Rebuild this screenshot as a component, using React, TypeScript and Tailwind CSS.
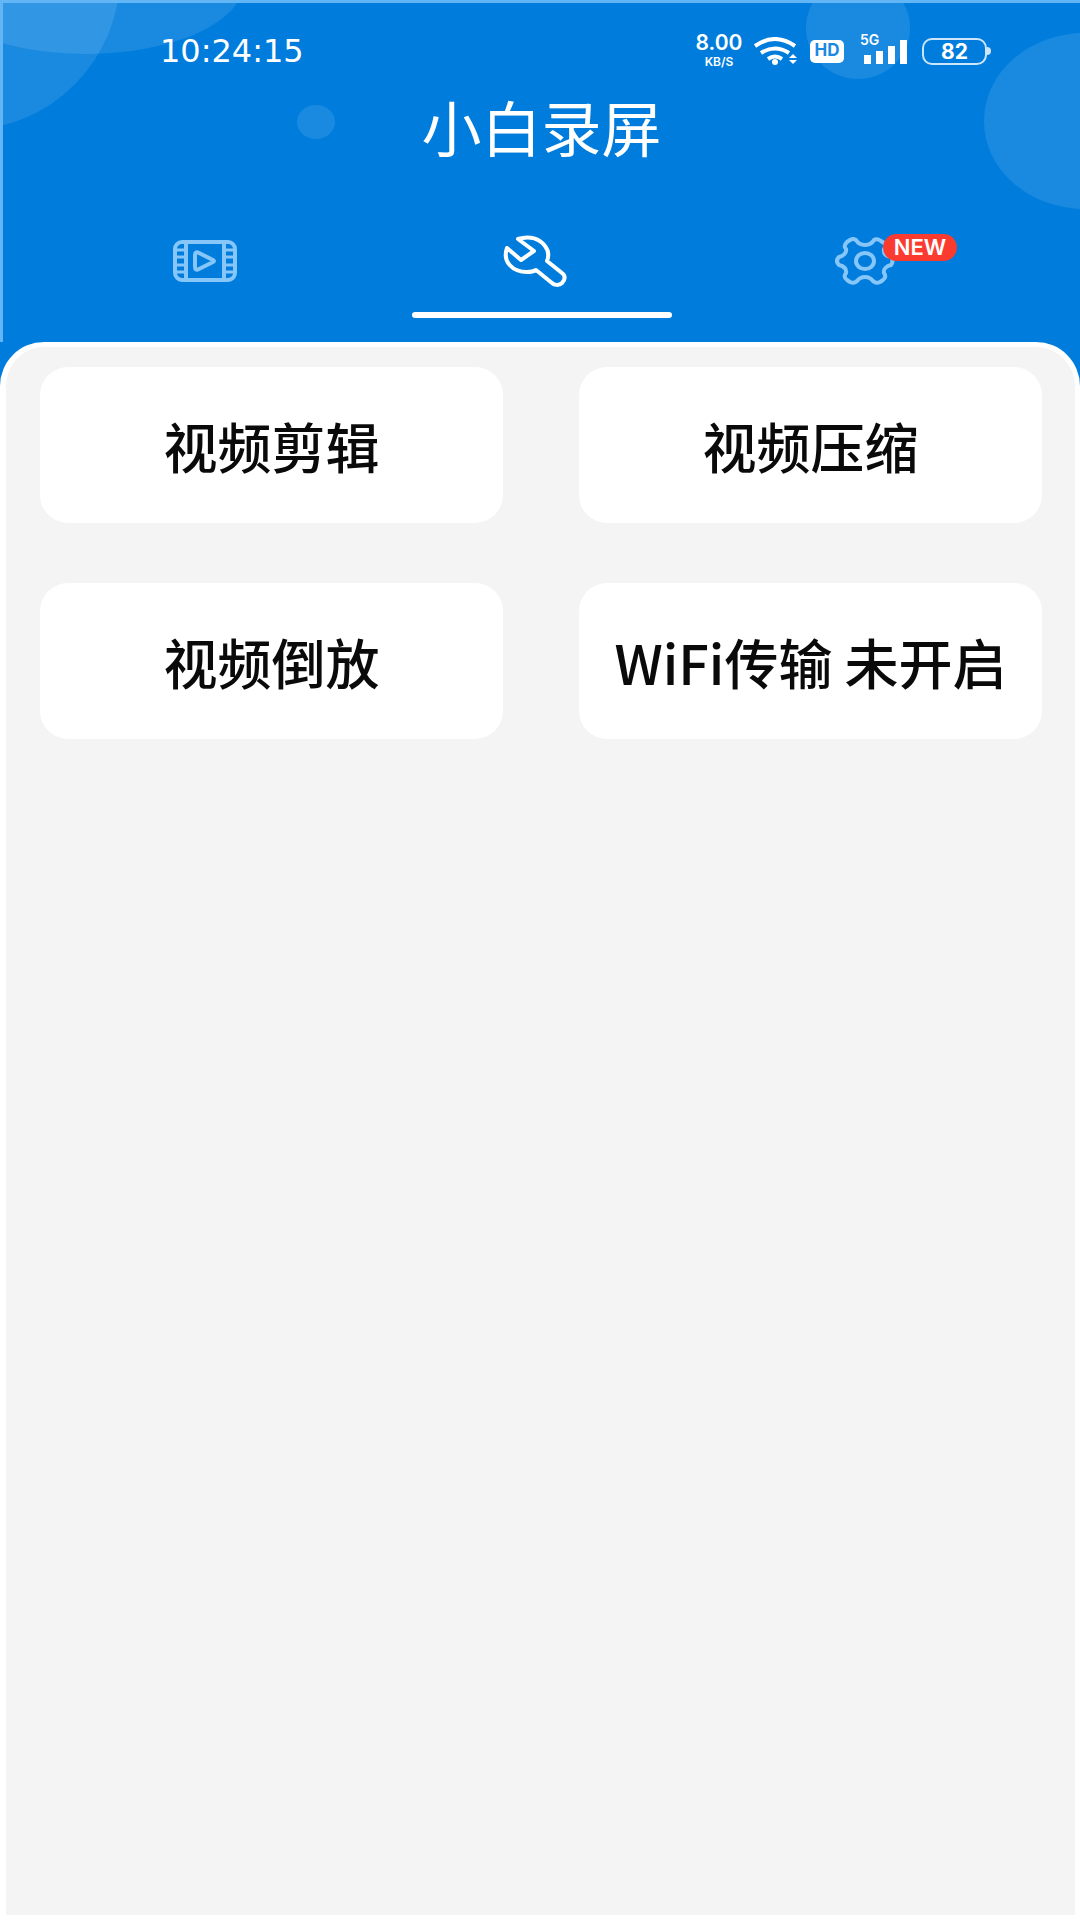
import { useState } from "react";
import clsx from "clsx";

const tools = ["视频剪辑", "视频压缩", "视频倒放", "WiFi传输 未开启"];

function FilmIcon() {
  return (
    <svg width="64" height="42" viewBox="0 0 64 42" fill="none" stroke="currentColor" strokeWidth="4" strokeLinejoin="round">
      <rect x="2" y="2" width="60" height="38" rx="7" />
      <path d="M13 2v38M51 2v38" />
      <path strokeWidth="3" d="M2 10h10M2 17h10M2 25h10M2 32h10M52 10h10M52 17h10M52 25h10M52 32h10" />
      <path d="M22 15q0-4 4-2l14 7q2 1 0 2l-14 7q-4 2-4-2z" />
    </svg>
  );
}

function WrenchIcon() {
  return (
    <svg width="64" height="52" viewBox="0 0 64 52" fill="none" stroke="currentColor" strokeWidth="4" strokeLinejoin="round">
      <path d="M15 4C27 0 37 4 42 11C46 16 46 21 44 26L59 38C63 41 62 45 59 48C56 51 51 50 49 48L33 35Q30 37 24 37C10 37 -1 27 4 13L18 25L31 16Z" />
    </svg>
  );
}

function GearIcon() {
  return (
    <svg width="60" height="48" viewBox="0 0 60 48" fill="none" stroke="currentColor" strokeWidth="4" strokeLinejoin="round">
      <path d="M21 3Q24 8 30 8T39 3Q42 1 46 4L49 6Q52 9 49 12C48 17 52 20 56 20Q59 24 56 28C52 29 48 32 49 36Q52 40 48 43L45 45Q41 47 38 44Q35 40 30 40T22 44Q19 47 15 45L12 43Q8 40 11 36C12 31 8 29 4 28Q0 24 4 20C8 19 12 16 11 12Q8 9 12 5L15 3Q18 1 21 3Z" />
      <ellipse cx="30" cy="24" rx="9" ry="8" />
    </svg>
  );
}

function WifiIcon() {
  return (
    <svg width="44" height="28" viewBox="0 0 44 28" fill="none" stroke="currentColor" strokeWidth="4">
      <path d="M1 9q20-14 40 0M7 16q14-9 28 0M14 22q7-5 14 0" />
      <circle cx="21" cy="25" r="3" fill="currentColor" stroke="none" />
      <path d="M35 21l4-4 4 4zM35 23l4 4 4-4z" fill="currentColor" stroke="none" />
    </svg>
  );
}

function StatusBar() {
  return (
    <div className="flex h-24 items-center justify-between pr-[89px] pl-[157px]">
      <time className="text-[32px] leading-none font-[DejaVu_Sans,sans-serif]">10:24:15</time>
      <div className="flex items-center">
        <div className="flex w-[54px] flex-col items-center gap-1 font-semibold">
          <span className="text-[21px] leading-[18px]">8.00</span>
          <span className="text-[12px] leading-[12px]">KB/S</span>
        </div>
        <div className="ml-2">
          <WifiIcon />
        </div>
        <span className="ml-3 flex h-[23px] w-[34px] items-center justify-center rounded-[5px] bg-white text-[17px] font-bold text-[#1b88e1]">
          HD
        </span>
        <div className="relative ml-4 w-12">
          <span className="absolute -top-1 left-0 text-[14px] leading-none font-semibold">5G</span>
          <svg width="48" height="28" viewBox="0 0 48 28" fill="currentColor">
            <path d="M4 18h7v9H4zM16 14h7v13h-7zM28 9h7v18h-7zM40 3h7v24h-7z" />
          </svg>
        </div>
        <div className="ml-[14px] flex items-center">
          <span className="flex h-[27px] w-[65px] items-center justify-center rounded-[10px] border-2 border-white/80 text-[21px] leading-none font-bold">
            82
          </span>
          <span className="h-2 w-1 rounded-r bg-white/80" />
        </div>
      </div>
    </div>
  );
}

function Bubbles() {
  return (
    <div aria-hidden="true" className="pointer-events-none absolute inset-0 overflow-hidden">
      <div className="absolute -top-[183px] -left-[193px] size-[310px] rounded-full bg-white/10" />
      <div className="absolute -top-[93px] -left-[75px] h-36 w-[316px] rounded-[50%] bg-white/10" />
      <div className="absolute top-[102px] left-[294px] h-[34px] w-[38px] rounded-[50%] bg-white/10" />
      <div className="absolute -top-[26px] right-[170px] h-[102px] w-[104px] rounded-[50%] bg-white/10" />
      <div className="absolute top-[30px] -right-[106px] h-[176px] w-[202px] rounded-[50%] bg-white/10" />
    </div>
  );
}

const tabs = [
  { id: "videos", label: "视频", icon: <FilmIcon /> },
  { id: "tools", label: "工具", icon: <WrenchIcon /> },
  { id: "settings", label: "设置", icon: <GearIcon />, badge: "NEW" },
];

export default function App() {
  const [active, setActive] = useState("tools");

  return (
    <div className="flex min-h-screen flex-col bg-[#007ddc] font-[Inter,'Noto_Sans_CJK_SC',sans-serif]">
      <header className="relative border-t-3 border-l-3 border-[#62b6f5] pb-6 text-white">
        <Bubbles />
        <div className="relative">
          <StatusBar />
          <h1 className="text-center text-[60px] leading-[54px] font-[Noto_Sans_CJK_SC,sans-serif]">小白录屏</h1>

          {/* Tabs */}
          <nav className="mt-[75px] grid h-[66px] grid-cols-3 pr-[50px] pl-[37px]">
            {tabs.map((tab) => (
              <button
                key={tab.id}
                type="button"
                aria-label={tab.label}
                aria-pressed={tab.id === active}
                onClick={() => setActive(tab.id)}
                className="flex items-center justify-center"
              >
                <span className="relative">
                  <span className={clsx("block", tab.id === active ? "text-white" : "text-[#86c6f8]")}>{tab.icon}</span>
                  {tab.badge && (
                    <span className="absolute -top-[3px] left-12 flex h-[27px] w-[74px] items-center justify-center rounded-full bg-[#fb3a30] text-[22px] font-semibold text-white">
                      {tab.badge}
                    </span>
                  )}
                </span>
              </button>
            ))}
          </nav>
          <div className="mx-auto mt-[18px] h-[6px] w-[260px] rounded-full bg-white" />
        </div>
      </header>

      {/* Tool cards */}
      <main className="grow rounded-t-[44px] border-[5px] border-l-[6px] border-white bg-[#f4f4f4] pt-5 pr-[33px] pl-[34px]">
        <div className="grid grid-cols-2 gap-x-[76px] gap-y-[60px]">
          {tools.map((tool) => (
            <button
              key={tool}
              type="button"
              className="h-[156px] rounded-[28px] bg-white text-[54px] font-medium whitespace-nowrap text-[#0a0a0a] font-[Noto_Sans_CJK_SC,sans-serif]"
            >
              {tool}
            </button>
          ))}
        </div>
      </main>
    </div>
  );
}
